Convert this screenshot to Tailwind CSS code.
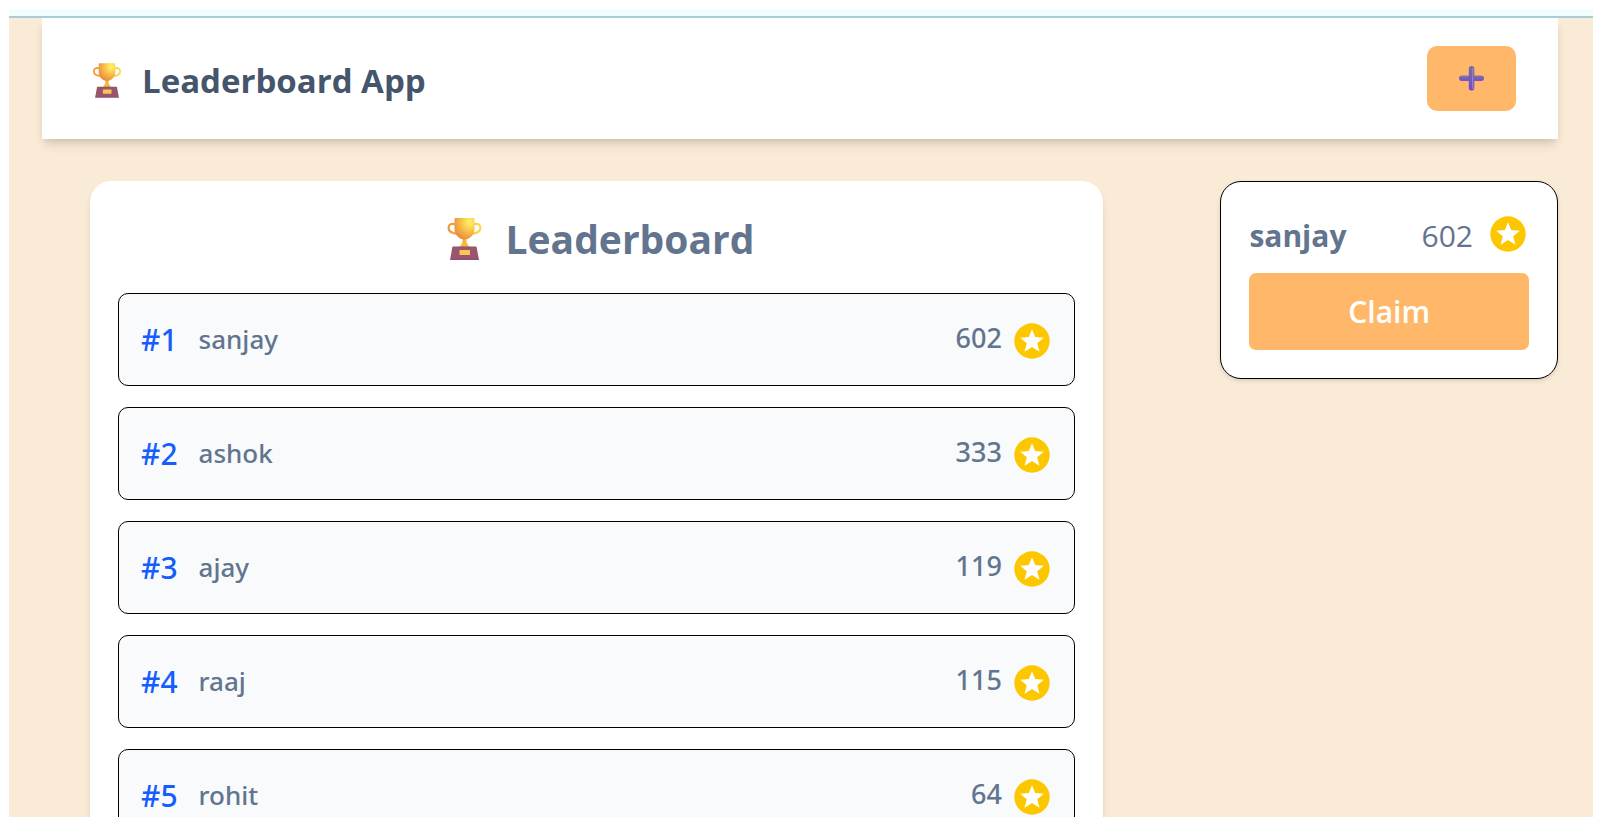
<!DOCTYPE html>
<html lang="en">
<head>
<meta charset="utf-8">
<meta name="viewport" content="width=device-width, initial-scale=1">
<title>Leaderboard App</title>
<script src="https://cdn.jsdelivr.net/npm/@tailwindcss/browser@4"></script>
</head>
<body class="flex h-screen flex-col bg-white p-[9px] font-['Open_Sans','Noto_Sans',sans-serif] text-[#62748e]">
<svg class="absolute size-0" aria-hidden="true">
  <defs>
    <radialGradient id="cup" cx="0.75" cy="0.2" r="0.95">
      <stop offset="0" stop-color="#fff66b"/><stop offset="0.45" stop-color="#f9bf48"/><stop offset="1" stop-color="#e5813a"/>
    </radialGradient>
    <linearGradient id="handle" x1="0" x2="1"><stop offset="0" stop-color="#ee9a35"/><stop offset="1" stop-color="#ffd84a"/></linearGradient>
    <linearGradient id="base" x1="0" y1="0" x2="0" y2="1"><stop offset="0" stop-color="#8f5260"/><stop offset="0.15" stop-color="#9a566a"/><stop offset="0.85" stop-color="#98566c"/><stop offset="1" stop-color="#94487a"/></linearGradient>
    <linearGradient id="barH" x1="0" y1="0" x2="0" y2="1"><stop offset="0" stop-color="#8b7a9c"/><stop offset="0.5" stop-color="#7460b4"/><stop offset="1" stop-color="#8446e6"/></linearGradient>
    <linearGradient id="barV" x1="0" y1="0" x2="0" y2="1"><stop offset="0" stop-color="#7d6aa4"/><stop offset="0.6" stop-color="#705cb4"/><stop offset="1" stop-color="#7b3fe0"/></linearGradient>
  </defs>
  <symbol id="trophy" viewBox="0 0 34 42">
    <path d="M7.500 6.200C3.500 5 1.100 6.700 1.100 10C1.100 13.500 4.500 15.200 9.500 15.800M26.500 6.200C30.500 5 32.900 6.700 32.900 10C32.900 13.500 29.500 15.200 24.500 15.800" fill="none" stroke="url(#handle)" stroke-width="2.200"/>
    <path d="M15 20H19V23C19 25.500 21 27.500 22.500 29.500H11.500C13 27.500 15 25.500 15 23Z" fill="#f6b83f"/>
    <path d="M7 1Q7 0 8 0H26Q27 0 27 1V11C27 17 22 21.500 17 21.500S7 17 7 11Z" fill="url(#cup)"/>
    <path d="M5.500 28.500H28.500Q29 28.500 29.200 29.500L31.500 42H2.500L4.800 29.500Q5 28.500 5.500 28.500Z" fill="url(#base)"/>
    <rect x="12" y="32" width="10.500" height="5" rx="0.500" fill="#fcc458"/>
  </symbol>
  <symbol id="star" viewBox="0 0 36 36">
    <circle cx="18" cy="18" r="17.700" fill="#fdc700"/>
    <path d="M18 6.200L21.200 14.100L29.900 14.700L23.200 20.200L25.500 28.800L18 24.100L10.500 28.800L12.800 20.200L6.100 14.700L14.800 14.100Z" fill="#fff"/>
  </symbol>
</svg>
<div class="h-[9px] shrink-0 border-b-2 border-[#a8cdd2] bg-[#f2fdff]"></div>
<div class="min-h-0 flex-1 overflow-y-auto bg-[#faebd7] [scrollbar-width:none]">
  <header class="mr-[35px] ml-[33px] flex items-center justify-between bg-white py-7 pr-[42px] pl-[51px] shadow-[0_7px_11px_-2px_rgba(0,0,0,0.12),0_4px_7px_-3px_rgba(0,0,0,0.12)]">
    <h1 class="flex items-center gap-[21px] pt-1 text-[33px] leading-[61px] font-bold text-[#45556c]">
      <svg class="h-[35px] w-[28px]" aria-hidden="true"><use href="#trophy"/></svg>
      <span>Leaderboard App</span>
    </h1>
    <button type="button" aria-label="Add user" class="flex h-[65px] w-[89px] items-center justify-center rounded-[10px] bg-[#ffb86a]">
      <svg class="h-[25px] w-[25px]" viewBox="0 0 25 25" aria-hidden="true">
        <rect x="0" y="9.500" width="25" height="5.500" rx="2.700" fill="url(#barH)"/>
        <rect x="9.800" y="0" width="5.500" height="24.500" rx="2.500" fill="url(#barV)"/>
        <path d="M13.600 2V23" stroke="#9187b4" stroke-width="1.200"/>
      </svg>
    </button>
  </header>
  <main class="mt-[42px] mr-[35px] ml-[81px] flex items-start justify-between pb-10">
    <section class="w-[69%] rounded-[21px] bg-white p-7 shadow-[0_7px_11px_-2px_rgba(0,0,0,0.1),0_4px_7px_-3px_rgba(0,0,0,0.1)]">
      <h2 class="mb-6 flex items-center justify-center gap-6 pl-2 text-[39px] leading-[60px] font-bold">
        <svg class="h-[42px] w-[35px]" aria-hidden="true"><use href="#trophy"/></svg>
        <span>Leaderboard</span>
      </h2>
      <ol class="flex flex-col gap-[21px] font-['Noto_Sans','Open_Sans',sans-serif]">
        <li class="flex h-[93px] items-center justify-between rounded-[10px] border border-black bg-[#f8fafc] pr-6 pl-[22px] font-medium">
          <div class="flex items-center gap-[21px]"><span class="text-[30px] text-[#155dfc]">#1</span><span class="text-[26px]">sanjay</span></div>
          <div class="flex items-center gap-3"><span class="pb-[3px] text-[27px]">602</span><svg class="mt-[3px] size-9" aria-hidden="true"><use href="#star"/></svg></div>
        </li>
        <li class="flex h-[93px] items-center justify-between rounded-[10px] border border-black bg-[#f8fafc] pr-6 pl-[22px] font-medium">
          <div class="flex items-center gap-[21px]"><span class="text-[30px] text-[#155dfc]">#2</span><span class="text-[26px]">ashok</span></div>
          <div class="flex items-center gap-3"><span class="pb-[3px] text-[27px]">333</span><svg class="mt-[3px] size-9" aria-hidden="true"><use href="#star"/></svg></div>
        </li>
        <li class="flex h-[93px] items-center justify-between rounded-[10px] border border-black bg-[#f8fafc] pr-6 pl-[22px] font-medium">
          <div class="flex items-center gap-[21px]"><span class="text-[30px] text-[#155dfc]">#3</span><span class="text-[26px]">ajay</span></div>
          <div class="flex items-center gap-3"><span class="pb-[3px] text-[27px]">119</span><svg class="mt-[3px] size-9" aria-hidden="true"><use href="#star"/></svg></div>
        </li>
        <li class="flex h-[93px] items-center justify-between rounded-[10px] border border-black bg-[#f8fafc] pr-6 pl-[22px] font-medium">
          <div class="flex items-center gap-[21px]"><span class="text-[30px] text-[#155dfc]">#4</span><span class="text-[26px]">raaj</span></div>
          <div class="flex items-center gap-3"><span class="pb-[3px] text-[27px]">115</span><svg class="mt-[3px] size-9" aria-hidden="true"><use href="#star"/></svg></div>
        </li>
        <li class="flex h-[93px] items-center justify-between rounded-[10px] border border-black bg-[#f8fafc] pr-6 pl-[22px] font-medium">
          <div class="flex items-center gap-[21px]"><span class="text-[30px] text-[#155dfc]">#5</span><span class="text-[26px]">rohit</span></div>
          <div class="flex items-center gap-3"><span class="pb-[3px] text-[27px]">64</span><svg class="mt-[3px] size-9" aria-hidden="true"><use href="#star"/></svg></div>
        </li>
      </ol>
    </section>
    <aside class="w-[23%] rounded-[21px] border border-black bg-white p-7 shadow-[0_2px_5px_rgba(0,0,0,0.1),0_2px_3px_-2px_rgba(0,0,0,0.1)]">
      <div class="mb-3 flex items-center justify-between pr-[3px] text-[30px] leading-[51px]">
        <h3 class="font-bold">sanjay</h3>
        <div class="flex items-center gap-[17px]"><span class="font-normal">602</span><svg class="mb-1 size-9" aria-hidden="true"><use href="#star"/></svg></div>
      </div>
      <button type="button" class="h-[77px] w-full rounded-[7px] bg-[#ffb86a] text-[30px] font-semibold text-white">Claim</button>
    </aside>
  </main>
</div>
</body>
</html>
